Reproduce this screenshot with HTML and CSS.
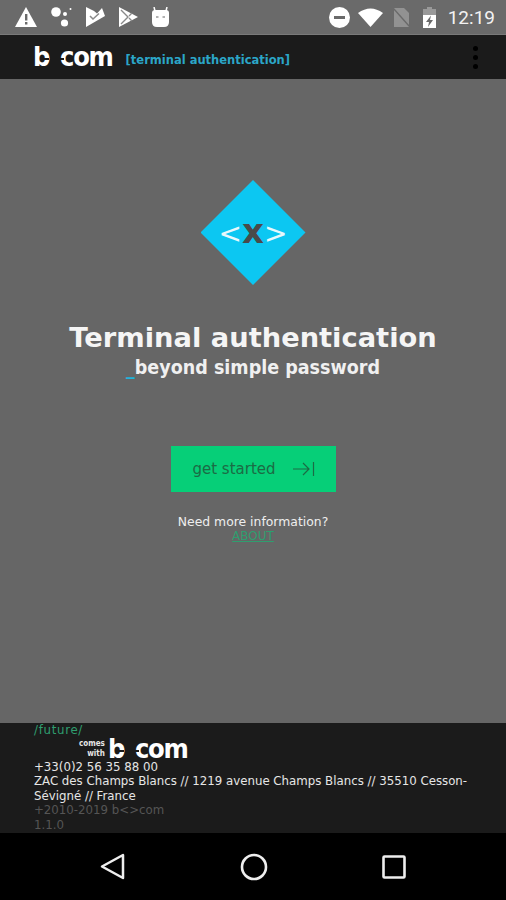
FILE: index.html
```html
<!DOCTYPE html>
<html lang="en">
<head>
  <meta charset="UTF-8">
  <meta name="viewport" content="width=device-width, initial-scale=1.0">
  <title>Terminal authentication</title>
  <link rel="stylesheet" href="styles.css">
</head>
<body>
  <div class="status-bar">
    <div class="status-left">
      <svg width="22" height="20" viewBox="0 0 22 20"><path d="M11 0 L22 20 H0 Z" fill="#fff"/><path d="M10 7h2.400v6.500H10z M10 15h2.400v2.500H10z" fill="#6a6a6a"/></svg>
      <svg width="21" height="20" viewBox="0 0 21 20" fill="#fff"><circle cx="5" cy="5" r="4.800"/><circle cx="13.500" cy="16" r="3.600"/><circle cx="14" cy="7" r="2"/><circle cx="19.500" cy="2" r="1"/></svg>
      <svg width="19" height="20" viewBox="0 0 19 20"><path d="M0 0 L8 4 L11 6.500 L16 1 L19 9 L0 20 Z" fill="#fff"/><path d="M4 9 L7 12 L13 6.500" fill="none" stroke="#8a8a8a" stroke-width="1.500"/></svg>
      <svg width="19" height="20" viewBox="0 0 19 20"><path d="M0 0 L19 10 L0 20 Z" fill="#fff"/><path d="M2 3 L9 10 L2 17 M10 9 L13 6 M10 11 L13 14" fill="none" stroke="#8a8a8a" stroke-width="1.400"/></svg>
      <svg width="17" height="20" viewBox="0 0 17 20"><path d="M0 6 Q0 3 3 3 H14 Q17 3 17 6 V15 Q17 20 12 20 H5 Q0 20 0 15 Z" fill="#fff"/><path d="M3 4 L2 0 M14 4 L15 0" stroke="#fff" stroke-width="1.500"/><path d="M4 10h2.500M10.500 10h2.500" stroke="#999" stroke-width="1.500"/></svg>
    </div>
    <div class="status-right">
      <svg width="21" height="21" viewBox="0 0 21 21"><circle cx="10.500" cy="10.500" r="10.500" fill="#fff"/><rect x="5" y="9" width="11" height="3" fill="#6a6a6a"/></svg>
      <svg width="25" height="19" viewBox="0 0 25 19"><path d="M0 5 Q12.500 -4 25 5 L12.500 19 Z" fill="#fff"/></svg>
      <svg width="17" height="19" viewBox="0 0 17 19"><path d="M1 0 H11 L16 5 V19 H1 Z" fill="#929292"/><path d="M0 0 L17 19" stroke="#6a6a6a" stroke-width="1.500"/></svg>
      <svg width="15" height="21" viewBox="0 0 15 21"><path d="M5 0h5v2h4v19H1V2h4z" fill="#999"/><path d="M1 8H14V21H1Z" fill="#fff"/><path d="M9 8.500 L4 15 H7 L6 20 L11 13 H8 Z" fill="#6a6a6a"/></svg>
      <span class="clock">12:19</span>
    </div>
  </div>

  <div class="toolbar">
    <div class="logo">
      <span class="logo-b">b</span><span class="logo-com">com</span>
    </div>
    <span class="app-tag">[terminal authentication]</span>
    <div class="menu-dots"><i></i><i></i><i></i></div>
  </div>

  <div class="main-content">
    <div class="diamond">
      <span class="diamond-text"><b>&lt;</b><em>x</em><b>&gt;</b></span>
    </div>
    <h1>Terminal authentication</h1>
    <p class="subtitle"><span class="underscore">_</span>beyond simple password</p>
    <button class="start-btn">
      <span>get started</span>
      <svg width="22" height="16" viewBox="0 0 22 16" fill="none" stroke="#1c6b45" stroke-width="1.200"><path d="M0 8H16M10 2L16 8L10 14M20.500 1V15"/></svg>
    </button>
    <p class="more-info">Need more information?</p>
    <a class="about-link" href="#">ABOUT</a>
  </div>

  <div class="footer">
    <div class="future">/future/</div>
    <div class="comes-with">
      <span class="comes-text">comes<br>with</span>
      <div class="logo"><span class="logo-b">b</span><span class="logo-com">com</span></div>
    </div>
    <div>+33(0)2 56 35 88 00</div>
    <div>ZAC des Champs Blancs // 1219 avenue Champs Blancs // 35510 Cesson-Sévigné // France</div>
    <div class="muted">+2010-2019 b&lt;&gt;com</div>
    <div class="muted">1.1.0</div>
  </div>

  <div class="nav-bar">
    <svg width="26" height="28" viewBox="0 0 26 28" fill="none" stroke="#eee" stroke-width="2.500" stroke-linejoin="round"><path d="M23 2 V25 L2 13.500 Z"/></svg>
    <svg width="28" height="28" viewBox="0 0 28 28" fill="none" stroke="#eee" stroke-width="2.600"><circle cx="14" cy="14" r="12"/></svg>
    <svg width="24" height="24" viewBox="0 0 24 24" fill="none" stroke="#eee" stroke-width="2.600" stroke-linejoin="round"><rect x="1.500" y="1.500" width="21" height="21" rx="1"/></svg>
  </div>
</body>
</html>
```

FILE: styles.css
```css
* { box-sizing: border-box; }
body {
  margin: 0;
  width: 506px;
  height: 900px;
  overflow: hidden;
  font-family: 'DejaVu Sans', sans-serif;
  background: #666;
  color: #fff;
  display: flex;
  flex-direction: column;
}
.status-bar {
  height: 35px;
  background: #6a6a6a;
  border-bottom: 1px solid #7a7a7a;
  display: flex;
  justify-content: space-between;
  align-items: center;
  padding: 0 11px 0 15px;
  flex: none;
}
.status-left, .status-right {
  display: flex;
  align-items: center;
}
.status-left { gap: 14px; }
.status-right svg:nth-child(2) { margin-left: 8px; }
.status-right svg:nth-child(3) { margin-left: 10px; }
.status-right svg:nth-child(4) { margin-left: 12px; }
.clock {
  font-family: Roboto, sans-serif;
  font-size: 19px;
  color: #f2f2f2;
  margin-left: 11px;
}
.toolbar {
  height: 44px;
  background: #1b1b1b;
  display: flex;
  align-items: center;
  padding: 0 28px 0 33px;
  flex: none;
}
.logo {
  display: flex;
  align-items: baseline;
  gap: 11px;
  font-family: 'DejaVu Sans', sans-serif;
  font-stretch: condensed;
  font-weight: bold;
  font-size: 27px;
  letter-spacing: -1.300px;
  line-height: 22px;
  color: #fff;
}
.logo-b, .logo-com {
  position: relative;
}
/* notches of the b<>com mark */
.logo-b::after, .logo-com::before {
  content: "";
  position: absolute;
  top: 12px;
  width: 5px;
  height: 2px;
  background: #1b1b1b;
}
.logo-b::after { right: 0; }
.logo-com::before { left: -1px; }
.app-tag {
  font-size: 11.500px;
  font-weight: bold;
  color: #2ba6c8;
  margin-left: 13px;
  margin-top: 5px;
}
.menu-dots {
  margin-left: auto;
  display: flex;
  flex-direction: column;
  gap: 4px;
}
.menu-dots i {
  width: 5px;
  height: 5px;
  border-radius: 50%;
  background: #000;
}
.main-content {
  flex: 1;
  display: flex;
  flex-direction: column;
  align-items: center;
  padding-top: 101px;
}
.diamond {
  width: 105px;
  height: 105px;
  padding-bottom: 4px;
  background: #0cc7f2;
  clip-path: polygon(50% 0, 100% 50%, 50% 100%, 0 50%);
  display: flex;
  align-items: center;
  justify-content: center;
}
.diamond-text {
  font-size: 28px;
  line-height: 1;
}
.diamond-text b {
  font-weight: normal;
  color: #e8f8fc;
}
.diamond-text em {
  font-size: 34px;
  font-style: normal;
  font-weight: bold;
  color: #4a4a4a;
}
h1 {
  margin: 36px 0 0;
  font-size: 27.300px;
  line-height: 34px;
  font-weight: bold;
  color: #f5f5f5;
}
.subtitle {
  margin: 0;
  font-size: 19.500px;
  font-stretch: condensed;
  line-height: 26px;
  font-weight: bold;
  color: #f0f0f0;
}
.underscore { color: #20b4dc; }
.start-btn {
  margin: 65px 0 0 1px;
  width: 165px;
  height: 46px;
  background: #06cf78;
  border: none;
  display: flex;
  align-items: center;
  justify-content: center;
  gap: 17px;
  font-family: 'DejaVu Sans', sans-serif;
  font-size: 15px;
  color: #1c6b45;
}
.more-info {
  margin: 22px 0 0;
  font-size: 12.400px;
  line-height: 15px;
  color: #eee;
}
.about-link {
  font-size: 12px;
  line-height: 15px;
  color: #2f9e6f;
}
.footer {
  height: 110px;
  background: #1b1b1b;
  padding: 0 36px 0 34px;
  font-size: 13.100px;
  font-stretch: condensed;
  line-height: 14.500px;
  color: #e6e6e6;
  flex: none;
}
.future {
  color: #2f9e6f;
  letter-spacing: 0.700px;
}
.comes-with {
  display: flex;
  align-items: center;
  height: 22px;
  padding-left: 45px;
  gap: 3px;
}
.comes-text {
  font-size: 8px;
  line-height: 10px;
  font-weight: bold;
  text-align: right;
}
.muted { color: #555; }
.nav-bar {
  height: 67px;
  background: #000;
  display: flex;
  align-items: center;
  justify-content: space-between;
  padding: 0 100px;
  flex: none;
}
```
